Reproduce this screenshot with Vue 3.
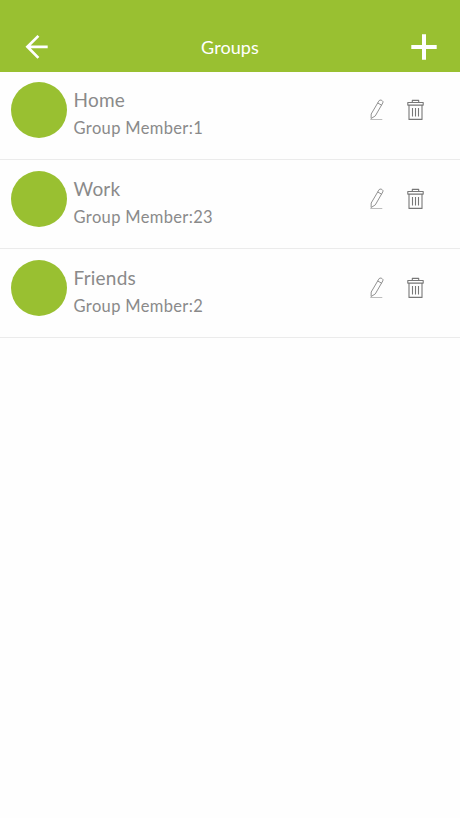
<script setup>
const groups = [
  { name: 'Home', members: 1 },
  { name: 'Work', members: 23 },
  { name: 'Friends', members: 2 }
]
</script>

<template>
  <main class="screen">
    <header class="bar">
      <button class="bar-button" aria-label="Back">
        <svg width="24" height="26" viewBox="0 0 24 26" fill="none" stroke="#fff" stroke-width="2.7">
          <path d="M14.4 1.9 3.4 12.8l11 11.1M3.4 12.8h20.3" />
        </svg>
      </button>
      <h1 class="title">Groups</h1>
      <button class="bar-button" aria-label="Add group">
        <svg width="26" height="26" viewBox="0 0 26 26" fill="none" stroke="#fff" stroke-width="4">
          <path d="M13 .3v25.4M.3 13h25.4" />
        </svg>
      </button>
    </header>
    <ul class="list">
      <li v-for="group in groups" :key="group.name" class="row">
        <span class="avatar"></span>
        <div class="info">
          <span class="name">{{ group.name }}</span>
          <span class="count">Group Member:{{ group.members }}</span>
        </div>
        <div class="actions">
          <button aria-label="Edit">
            <svg width="15" height="22" viewBox="-0.3 0 15 22" fill="none" stroke="#858585" stroke-width="0.9" stroke-linejoin="round">
              <path d="M9.5 2.1Q10.3.4 12 1.2l.9.5q1.3.8.6 2.2L6 16.9l-4.2 2.6.1-4.5zM8.4 4l4 2.2" />
              <path d="M1 20.5h12" stroke="#b5b5b5" />
            </svg>
          </button>
          <button aria-label="Delete">
            <svg width="18" height="22" viewBox="-0.5 0 18 22" fill="none" stroke="#777" stroke-width="1.1" stroke-linejoin="round">
              <path d="M1.3 3.5h15.4v2.6H1.3zM5.8 3.5V1.4h6.4v2.1M2.5 6.1v14.3h13V6.1M6 9v8.6M9 9v8.6M12 9v8.6" />
            </svg>
          </button>
        </div>
      </li>
    </ul>
  </main>
</template>

<style>
body {
  margin: 0;
  background: #fefefe;
}
</style>

<style scoped>
.screen {
  min-height: 818px;
  background: #fefefe;
  font-family: Lato, "Liberation Sans", sans-serif;
}

button {
  display: flex;
  padding: 0;
  border: 0;
  background: none;
}

.bar {
  display: flex;
  box-sizing: border-box;
  height: 71.5px;
  padding: 23px 23px 0 24px;
  align-items: center;
  justify-content: space-between;
  background: #99c031;
}

.title {
  margin: 0;
  padding-left: 1px;
  font-size: 18px;
  line-height: 24px;
  font-weight: 400;
  letter-spacing: 0.1px;
  color: #fff;
}

.list {
  margin: 0;
  padding: 0;
  list-style: none;
}

.row {
  display: flex;
  box-sizing: border-box;
  height: 88.8px;
  padding: 10.8px 36px 0 11px;
  align-items: flex-start;
  border-bottom: 1.5px solid #ebebeb;
}

.avatar {
  width: 56px;
  height: 56px;
  border-radius: 50%;
  background: #99c031;
}

.info {
  display: flex;
  flex: 1;
  flex-direction: column;
  gap: 4px;
  padding: 6px 0 0 6.6px;
  color: #8a8a8a;
}

.name {
  font-size: 19px;
  line-height: 24px;
  letter-spacing: 0.2px;
}

.count {
  font-size: 16.5px;
  line-height: 24px;
  letter-spacing: 0.35px;
}

.actions {
  display: flex;
  gap: 22px;
  padding-top: 17px;
}
</style>
